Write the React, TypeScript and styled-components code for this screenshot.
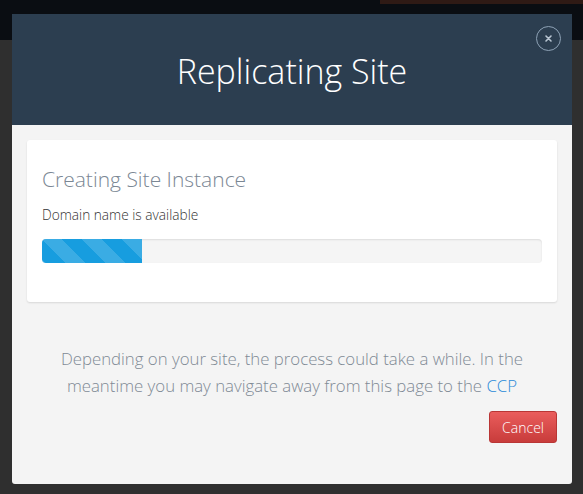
import React from "react";
import styled, { createGlobalStyle } from "styled-components";

const Global = createGlobalStyle`
  html, body { margin: 0; padding: 0; }
  body {
    width: 583px;
    height: 494px;
    overflow: hidden;
    background: #2f2f2f;
    font-family: "Open Sans", "Liberation Sans", sans-serif;
  }
`;

const Page = styled.div`
  position: relative;
  width: 583px;
  height: 494px;
  display: flex;
  flex-direction: column;
`;

const TopBar = styled.div`
  height: 40px;
  background: #0a0d12;
  display: flex;
  justify-content: flex-end;
`;

const TopAccent = styled.div`
  width: 203px;
  height: 4px;
  background: #2f1a15;
`;

const Backdrop = styled.div`
  flex: 1;
  background: #2f2f2f;
`;

const Modal = styled.div`
  position: absolute;
  left: 12px;
  top: 14px;
  width: 560px;
  height: 470px;
  background: #f4f4f4;
  border-radius: 0 0 3px 3px;
  display: flex;
  flex-direction: column;
  overflow: hidden;
`;

const Header = styled.div`
  position: relative;
  height: 111px;
  background: #2c3e50;
  display: flex;
  align-items: center;
  justify-content: center;
`;

const Title = styled.h1`
  margin: 0;
  margin-top: 2px;
  color: #ffffff;
  font-weight: 300;
  font-size: 34px;
  letter-spacing: 0;
`;

const CloseButton = styled.button`
  position: absolute;
  right: 11px;
  top: 12px;
  width: 25px;
  height: 25px;
  border-radius: 50%;
  border: 1px solid #8ea2b6;
  background: transparent;
  padding: 0;
  display: flex;
  align-items: center;
  justify-content: center;
`;

const Body = styled.div`
  flex: 1;
  padding: 15px 15px 0 15px;
  display: flex;
  flex-direction: column;
`;

const Card = styled.div`
  background: #ffffff;
  border-radius: 3px;
  box-shadow: 0 1px 2px rgba(0, 0, 0, 0.12);
  padding: 26px 15px 39px 15px;
`;

const CardTitle = styled.h2`
  margin: 0;
  font-weight: 300;
  font-size: 21px;
  line-height: 26px;
  color: #7b8794;
`;

const Status = styled.div`
  margin-top: 14px;
  font-size: 13.7px;
  font-weight: 300;
  line-height: 17px;
  color: #333;
`;

const Track = styled.div`
  margin-top: 16px;
  height: 24px;
  background: #f5f5f5;
  border-radius: 4px;
  box-shadow: inset 0 1px 2px rgba(0, 0, 0, 0.1);
  overflow: hidden;
`;

const Fill = styled.div`
  height: 100%;
  background-color: #179ddf;
  background-image: linear-gradient(
    45deg,
    rgba(255, 255, 255, 0.15) 25%,
    transparent 25%,
    transparent 50%,
    rgba(255, 255, 255, 0.15) 50%,
    rgba(255, 255, 255, 0.15) 75%,
    transparent 75%,
    transparent
  );
  background-size: 40px 40px;
`;

const Note = styled.p`
  margin: 43px 0 0 0;
  padding: 0 6px;
  text-align: center;
  font-size: 16.8px;
  font-weight: 300;
  line-height: 27px;
  color: #808a95;
`;

const Link = styled.a`
  color: #2b8ad8;
  text-decoration: none;
`;

const Actions = styled.div`
  margin-top: 12px;
  display: flex;
  justify-content: flex-end;
`;

const CancelButton = styled.button`
  font-family: "Open Sans", "Liberation Sans", sans-serif;
  font-size: 14px;
  font-weight: 300;
  color: #fff;
  height: 32px;
  padding: 0 12px;
  border: 1px solid #b93635;
  border-radius: 3px;
  background: linear-gradient(#ea5d5c, #c83c3b);
`;

export default function App() {
  const progress = 100;
  return (
    <>
      <Global />
      <Page>
        <TopBar>
          <TopAccent />
        </TopBar>
        <Backdrop />
        <Modal>
          <Header>
            <Title>Replicating Site</Title>
            <CloseButton aria-label="close">
              <svg width="9" height="9" viewBox="0 0 9 9">
                <path d="M2 2 L7 7 M7 2 L2 7" stroke="#b9c6d3" strokeWidth="1.6" strokeLinecap="round" />
              </svg>
            </CloseButton>
          </Header>
          <Body>
            <Card>
              <CardTitle>Creating Site Instance</CardTitle>
              <Status>Domain name is available</Status>
              <Track>
                <Fill style={{ width: progress }} />
              </Track>
            </Card>
            <Note>
              Depending on your site, the process could take a while. In the meantime you may navigate away from this page to the <Link href="#">CCP</Link>
            </Note>
            <Actions>
              <CancelButton>Cancel</CancelButton>
            </Actions>
          </Body>
        </Modal>
      </Page>
    </>
  );
}
